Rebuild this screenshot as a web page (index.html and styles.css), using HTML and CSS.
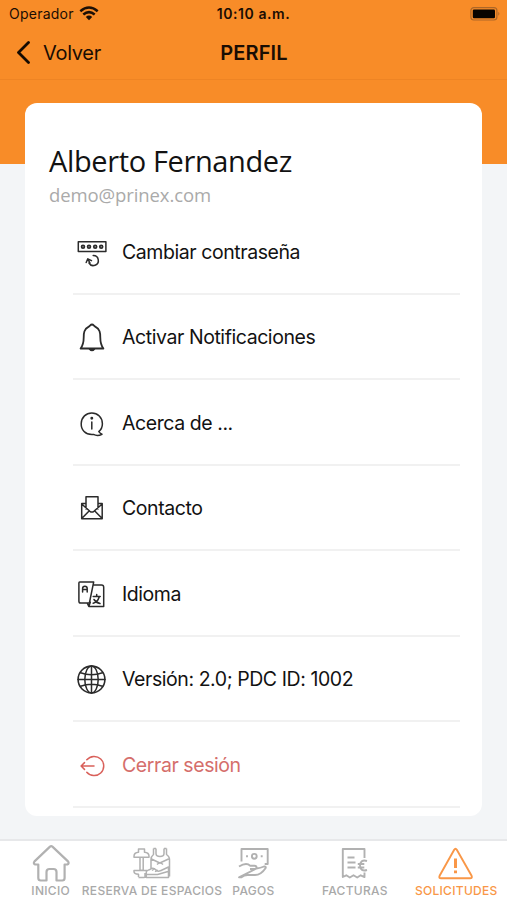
FILE: index.html
```
<!DOCTYPE html>
<html lang="es">
<head>
<meta charset="utf-8">
<title>Perfil</title>
<link rel="stylesheet" href="styles.css">
</head>
<body>
<div class="screen">
  <header class="header">
    <div class="status">
      <div class="carrier"><span class="operator">Operador</span>
        <svg width="20" height="15" viewBox="0 0 20 15"><g fill="none" stroke="#1d1006" stroke-width="2.5"><path d="M1.300 5.200Q10-2.200 18.700 5.200"/><path d="M4.300 8.500Q10 3.700 15.700 8.500"/></g><path d="M6.800 11Q10 8.200 13.200 11L10 14.200Z" fill="#1d1006"/></svg>
      </div>
      <div class="clock"><span>10:10 a.m.</span></div>
      <div class="battery"><svg width="31" height="14" viewBox="0 0 31 14"><rect x=".9" y=".6" width="26" height="12.400" rx="3" fill="none" stroke="#ad6728" stroke-width="1.200"/><rect x="2.800" y="2.500" width="22.200" height="8.800" rx="1.200" fill="#080400"/><path d="M28.300 4.800q2.200 2 0 4z" fill="#ad6728"/></svg></div>
    </div>
    <nav class="navbar">
      <div class="back"><svg width="16" height="24" viewBox="0 0 16 24"><path d="M13.500 1.500 3.500 11.500l10 10" fill="none" stroke="#160b02" stroke-width="2.800" stroke-linecap="round" stroke-linejoin="round"/></svg><span>Volver</span></div>
      <h1 class="title"><span>PERFIL</span></h1>
      <div></div>
    </nav>
  </header>
  <main class="content">
    <section class="card">
      <h2 class="name"><span>Alberto Fernandez</span></h2>
      <p class="email"><span>demo@prinex.com</span></p>
      <ul class="menu">
        <li><svg class="icon" viewBox="0 0 36 36"><rect x="4.300" y="7.700" width="27.600" height="9.800"/><g stroke-width="1.800"><circle cx="9" cy="12.700" r="1.400"/><circle cx="15" cy="12.700" r="1.400"/><circle cx="21.200" cy="12.700" r="1.400"/><circle cx="27.200" cy="12.700" r="1.400"/></g><path d="M19.200 21.500a5 5 0 1 1-4.200 7.500M12.200 28.500l1.600-3.700 3.700 1.800M13.800 25l2.200 4.200"/></svg><span>Cambiar contraseña</span></li>
        <li><svg class="icon" viewBox="0 0 36 36"><path stroke-width="1.800" d="M18 5.500c-1.500 0-2 1.500-3.200 2.100C10 10 9.700 14 9.700 18.500c0 5-.8 8-3.100 11h22.800c-2.300-3-3.100-6-3.100-11 0-4.500-.3-8.500-5.100-10.900C20 7 19.500 5.500 18 5.500Z"/><path d="M15.500 30q2.500 3.200 5 0z" fill="#161616"/></svg><span>Activar Notificaciones</span></li>
        <li><svg class="icon" viewBox="0 0 36 36"><path d="M24.800 26.600c1.100 1.500 2 2.200 3.200 2.700-3.500 1.700-6.200 1.400-8.500.1C11 30.200 7 24.500 7.200 18.500 7.500 12.200 12 8 17.800 8s10.600 4.600 10.600 10.700c0 3.300-1.300 6-3.600 7.900Z"/><path d="M17.800 17v7"/><circle cx="17.800" cy="13.300" r=".7" fill="#333"/></svg><span>Acerca de ...</span></li>
        <li><svg class="icon" viewBox="0 0 36 36"><path d="M12 19V6.700h12V19M12 13.500H7.700v15.300h20.500V13.500H24M7.700 14l8.200 7.300q2 1.500 4 0l8.300-7.300M7.700 28.500l7.400-7.500M28.200 28.500 20.800 21"/></svg><span>Contacto</span></li>
        <li><svg class="icon" viewBox="0 0 36 36"><path d="M5.700 5.900h14L15.400 27H6.700q-1.800 0-1.800-1.800V7q0-1.100.8-1.100ZM19.200 9h8.300q2.200 0 2.200 2.200v19.200H14.800L13.200 27M14.800 30.400l1.500-4.200"/><path d="M8.600 16v-3.500q0-2.300 2.300-2.300t2.300 2.300V16M8.600 13.400h4.600M19.200 20.500h7M22.700 18.500v2M25.200 21q-1.500 5-6 6.300M20 23.500q2 3.300 6 4"/></svg><span>Idioma</span></li>
        <li><svg class="icon" viewBox="0 0 36 36"><circle cx="17.500" cy="18.500" r="13.400" stroke-width="1.600"/><ellipse cx="17.500" cy="18.500" rx="6.700" ry="13.400"/><path d="M17.500 5v27M4 18.500h27M6.500 11.700q11 4 22 0M6.500 25.300q11-4 22 0"/></svg><span>Versión: 2.0; PDC ID: 1002</span></li>
        <li class="danger"><svg class="icon" viewBox="0 0 36 36"><path d="M12.800 12.800a9.600 9.600 0 1 1 0 12.400M20 19H7.500M10.500 15.600 7.100 19l3.400 3.400"/></svg><span>Cerrar sesión</span></li>
      </ul>
    </section>
  </main>
  <footer class="tabs">
    <div class="tab"><svg viewBox="0 0 40 40"><path stroke-width="2.200" d="M19 3.600q1.200-1 2.400 0L37 18.400q1.500 2-.7 3.100h-2.700V35q0 2.500-2.300 2.500h-5.800V29q0-3-3-3h-4q-3 0-3 3v8.500H9.700Q7.300 37.500 7.300 35V21.500H4.200q-2.300-1.100-.7-3.100Z"/></svg><span>INICIO</span></div>
    <div class="tab"><svg viewBox="0 0 40 40"><g stroke-width="1.500"><path d="M6.500 6h6v3.200q4.500.2 4.500 4v1H2v-1q0-3.800 4.500-4ZM8 14.300h3.200v13H8ZM6.500 34.500h6M6.500 34v-2.800Q2 31 2 28.500v-1h13M13 30v5M21.500 5.500v6q-2.500 2-2.500 5v9M24 5.500v5q0 3 4 3t4-3v-5M34.500 5.500v6q3 2 3 5v17M21.500 5.500H24M32 5.500h2.500M19.500 16l8.300 4 8.700-4M25 21.500q3-3 6 0M18 26.500q3-2.500 5.500 0 2 2.700 5 1.200L36.500 24v10.500H14.300V29q0-1.500 3.700-2.500ZM14.500 31.500h11L36 28.500M20 27.500l3-2M23 28.700l3-1.500"/></g></svg><span>RESERVA DE ESPACIOS</span></div>
    <div class="tab"><svg viewBox="0 0 40 40"><path d="M8.500 18.500V6h26.200v15h-3"/><circle cx="21.300" cy="13.300" r="2.400"/><path d="M14 12.300v2M28.700 12.300v2"/><path d="M6 23.500q4-2.500 7-2.500 2.500 0 4 1.700h4.500q2 .2 2 1.700t-2 1.600H17M23.500 25.500q4-.4 7.500-2 2.500-.2 1.500 1.800Q28 32 22 32h-7.500q-3.500.2-6 2.300H6Z"/></svg><span>PAGOS</span></div>
    <div class="tab"><svg viewBox="0 0 40 40"><path d="M29.500 15V6H7.800v28l3.500-1.700 3.500 2.200 3.700-2.200 3.700 2.200 3.500-2.200 3.800 1.800V29.500"/><path d="M12.500 14.500h7M12.500 19.500h8M12.500 24.500h8M32 18q-6.500-2-7 4.500.5 6.500 7 4.500M22.800 21h6.500M22.800 24.500h6.500"/></svg><span>FACTURAS</span></div>
    <div class="tab active"><svg viewBox="0 0 40 40"><path d="M18.200 6.800q1.300-2.200 2.600 0l14.800 26q1 2.500-1.600 2.500H5.200q-2.700 0-1.600-2.500Z"/><path stroke-width="3" d="M19.500 15.500v9.500M19.500 27.500v2.700"/></svg><span>SOLICITUDES</span></div>
  </footer>
</div>
</body>
</html>
```
FILE: styles.css
```
* { box-sizing: border-box; }
body { margin: 0; font-family: Inter, sans-serif; color: #121212; }
h1, h2, p, ul { margin: 0; padding: 0; font-weight: 400; }
span { white-space: nowrap; }
svg { display: block; flex: none; }
.screen { width: 507px; height: 900px; display: flex; flex-direction: column; overflow: hidden; background: linear-gradient(#f88c28 0 164px, #f3f5f7 164px); }
.header { height: 80px; border-bottom: 1px solid #ee8424; color: #1a0d03; }
.status, .navbar { display: grid; grid-template-columns: 1fr auto 1fr; align-items: center; }
.status { height: 27px; font-size: 14px; }
.carrier { display: flex; align-items: center; gap: 5px; padding-left: 9px; }
.operator { letter-spacing: .24px; }
.carrier svg { margin-bottom: 1px; }
.clock { font-weight: 600; letter-spacing: .55px; }
.battery { justify-self: end; padding-right: 6px; }
.navbar { height: 51px; font-size: 20px; }
.back { display: flex; align-items: center; gap: 12px; padding-left: 15px; }
.back span { letter-spacing: -.3px; }
.title { font-size: 20px; font-weight: 600; letter-spacing: .1px; padding-left: 1px; }
.content { flex: 1; padding: 23px 25px 0; }
.card { height: 713px; background: #fff; border-radius: 12px; padding: 37px 22px 0 24px; }
.name { font: 400 29px/41px "Open Sans", sans-serif; letter-spacing: -.37px; }
.email { font: 400 18.500px/27px "Open Sans", sans-serif; letter-spacing: -.1px; color: #aaa; margin-bottom: 1px; }
.menu { list-style: none; padding-left: 24px; }
.menu li { height: 85.500px; border-bottom: 2px solid #f1f1f1; display: flex; align-items: center; gap: 12px; padding: 2px 0 0 1px; font-size: 19.500px; letter-spacing: -.43px; }
.icon { width: 36px; height: 36px; fill: none; stroke: #2b2b2b; stroke-width: 1.500; stroke-linejoin: round; stroke-linecap: round; }
.menu .danger { color: #d56e6b; }
.danger .icon { stroke: #d9605a; }
.tabs { height: 61px; border-top: 2px solid #e7e8ea; background: #fff; display: grid; grid-template-columns: repeat(5, 101.400px); }
.tab { display: flex; flex-direction: column; align-items: center; padding-top: 2px; color: #a9a9a9; font-size: 12px; font-weight: 500; line-height: 15px; letter-spacing: .3px; min-width: 0; }
.tab svg { width: 40px; height: 40px; fill: none; stroke: #b1b1b1; stroke-width: 1.900; stroke-linejoin: round; }
.active { color: #f99747; }
.active svg { stroke: #f99747; }
```
